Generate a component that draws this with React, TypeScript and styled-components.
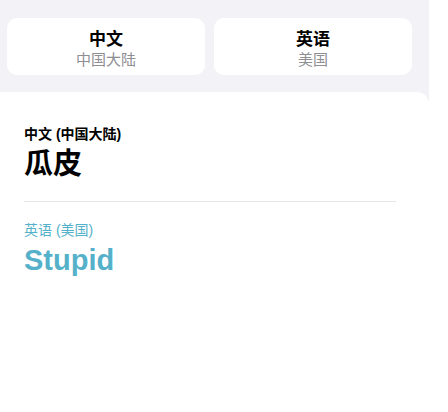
import React from "react";
import styled, { createGlobalStyle } from "styled-components";

const GlobalStyle = createGlobalStyle`
  html, body {
    margin: 0;
    padding: 0;
    background: #ffffff;
  }
  body {
    font-family: "Liberation Sans", "Noto Sans CJK SC", sans-serif;
    -webkit-font-smoothing: antialiased;
  }
`;

const Page = styled.div`
  width: 429px;
  height: 412px;
  background: #f2f2f7;
  display: flex;
  flex-direction: column;
  overflow: hidden;
`;

const TabRow = styled.div`
  display: flex;
  gap: 9px;
  padding: 18px 17px 0 7px;
`;

const Tab = styled.div`
  flex: 1;
  height: 57px;
  box-sizing: border-box;
  padding-top: 3px;
  background: #ffffff;
  border-radius: 10px;
  display: flex;
  flex-direction: column;
  align-items: center;
  justify-content: center;
  gap: 1px;
`;

const TabTitle = styled.div`
  font-family: "Noto Sans CJK SC", sans-serif;
  font-size: 17px;
  font-weight: 700;
  line-height: 20px;
  color: #000000;
`;

const TabSub = styled.div`
  font-family: "Noto Sans CJK SC", sans-serif;
  font-size: 15px;
  line-height: 19px;
  color: #8e8e93;
`;

const Card = styled.div`
  flex: 1;
  margin-top: 17px;
  background: #ffffff;
  border-top-right-radius: 12px;
  padding: 33px 33px 0 24px;
`;

const Section = styled.div<{ $tint?: string }>`
  color: ${(p) => p.$tint || "#000000"};
`;

const Label = styled.div<{ $light?: boolean }>`
  font-family: "Liberation Sans", "Noto Sans CJK SC", sans-serif;
  font-size: 14px;
  font-weight: ${(p) => (p.$light ? 400 : 600)};
  line-height: 18px;
`;

const Word = styled.div`
  font-family: "Liberation Sans", "Noto Sans CJK SC", sans-serif;
  font-size: 29px;
  font-weight: 700;
  line-height: 36px;
  margin-top: 3px;
`;

const Divider = styled.div`
  height: 1px;
  background: #e5e5ea;
  margin: 19px 0 19px;
`;

export default function App() {
  return (
    <>
      <GlobalStyle />
      <Page>
        <TabRow>
          <Tab>
            <TabTitle>中文</TabTitle>
            <TabSub>中国大陆</TabSub>
          </Tab>
          <Tab>
            <TabTitle>英语</TabTitle>
            <TabSub>美国</TabSub>
          </Tab>
        </TabRow>
        <Card>
          <Section>
            <Label>中文 (中国大陆)</Label>
            <Word>瓜皮</Word>
          </Section>
          <Divider />
          <Section $tint="#55b1ca">
            <Label $light>英语 (美国)</Label>
            <Word>Stupid</Word>
          </Section>
        </Card>
      </Page>
    </>
  );
}
